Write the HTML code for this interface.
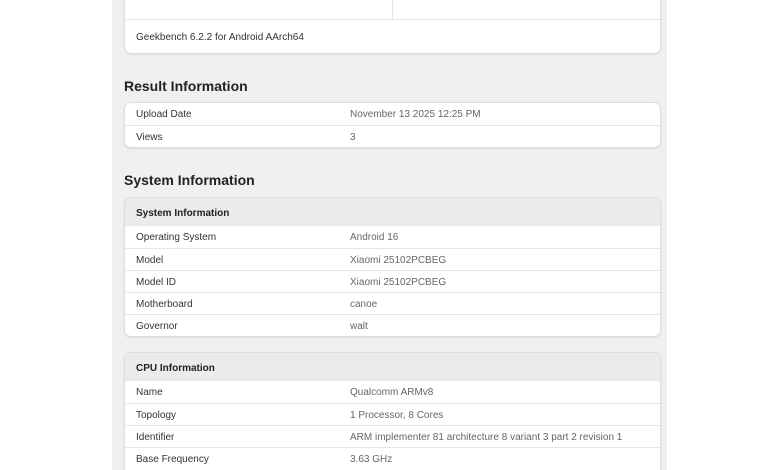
<!DOCTYPE html>
<html><head><style>
html,body{margin:0;width:780px;height:470px;overflow:hidden;background:#fff;font-family:"Liberation Sans",sans-serif;}
.col{position:absolute;left:112px;top:0;width:555px;height:470px;background:#f0f0f0;overflow:hidden;}
.card{position:absolute;left:12px;width:535px;background:#fff;border:1px solid #ddd;border-radius:7px;box-shadow:0 1px 2px rgba(0,0,0,.08);overflow:hidden;}
.row{height:22px;border-top:1px solid #e6e6e6;font-size:10px;color:#333;position:relative;box-sizing:border-box;}
.row:first-child{border-top:none}
.row span{position:absolute;top:6px}
.row .l{left:11px}.row .v{left:225px;color:#666}
.hd{height:28px;background:#ebebeb;font-size:10px;font-weight:bold;color:#222;padding:10px 0 0 11px;box-sizing:border-box;}
h2{position:absolute;left:12px;margin:0;font-size:14px;font-weight:bold;color:#222;}
</style></head><body>
<div class="col">
<div class="card" style="top:-10px;height:62px;">
 <div style="height:28px;border-bottom:1px solid #e6e6e6;position:relative"><div style="position:absolute;left:267px;top:0;bottom:0;border-left:1px solid #e6e6e6"></div></div>
 <div style="font-size:10px;color:#333;position:absolute;left:11px;top:41px">Geekbench 6.2.2 for Android AArch64</div>
</div>
<h2 style="top:78px">Result Information</h2>
<div class="card" style="top:102px;">
 <div class="row"><span class="l">Upload Date</span><span class="v">November 13 2025 12:25 PM</span></div>
 <div class="row"><span class="l">Views</span><span class="v">3</span></div>
</div>
<h2 style="top:172px">System Information</h2>
<div class="card" style="top:197px;">
 <div class="hd">System Information</div>
 <div class="row" style="border-top:none"><span class="l">Operating System</span><span class="v">Android 16</span></div>
 <div class="row"><span class="l">Model</span><span class="v">Xiaomi 25102PCBEG</span></div>
 <div class="row"><span class="l">Model ID</span><span class="v">Xiaomi 25102PCBEG</span></div>
 <div class="row"><span class="l">Motherboard</span><span class="v">canoe</span></div>
 <div class="row"><span class="l">Governor</span><span class="v">walt</span></div>
</div>
<div class="card" style="top:352px;height:130px;">
 <div class="hd">CPU Information</div>
 <div class="row" style="border-top:none"><span class="l">Name</span><span class="v">Qualcomm ARMv8</span></div>
 <div class="row"><span class="l">Topology</span><span class="v">1 Processor, 8 Cores</span></div>
 <div class="row"><span class="l">Identifier</span><span class="v">ARM implementer 81 architecture 8 variant 3 part 2 revision 1</span></div>
 <div class="row"><span class="l">Base Frequency</span><span class="v">3.63 GHz</span></div>
</div>
</div>
</body></html>
